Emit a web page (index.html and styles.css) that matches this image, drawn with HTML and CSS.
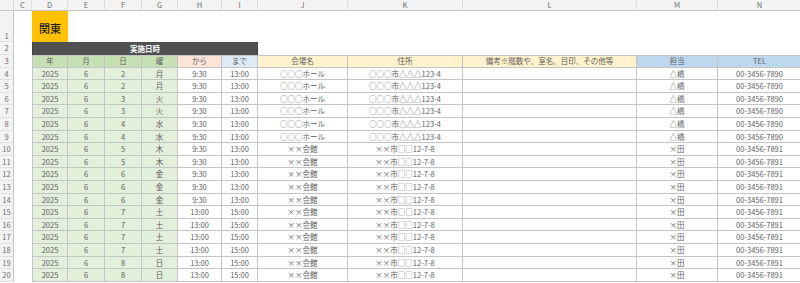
FILE: index.html
```html
<!DOCTYPE html>
<html lang="ja">
<head>
<meta charset="utf-8">
<link rel="stylesheet" href="styles.css">
</head>
<body>
<div class="sheet">
  <div class="ch corner"></div><div class="ch">C</div><div class="ch">D</div><div class="ch">E</div><div class="ch">F</div><div class="ch">G</div><div class="ch">H</div><div class="ch">I</div><div class="ch">J</div><div class="ch">K</div><div class="ch">L</div><div class="ch">M</div><div class="ch">N</div>

  <div class="rn rn-tall">1</div><div class="e"></div><div class="kanto">関東</div><div class="e span10"></div>

  <div class="rn">2</div><div class="e"></div><div class="bar">実施日時</div><div class="e span5"></div>

  <div class="rn">3</div><div class="e"></div>
  <div class="c h hg first">年</div><div class="c h hg">月</div><div class="c h hg">日</div><div class="c h hg">曜</div><div class="c h hp">から</div><div class="c h hb">まで</div><div class="c h hy">会場名</div><div class="c h hy">住所</div><div class="c h hy">備考※階数や、室名、目印、その他等</div><div class="c h hm">担当</div><div class="c h hm">TEL</div>

  <div class="rn">4</div><div class="e"></div><div class="c g first">2025</div><div class="c g">6</div><div class="c g">2</div><div class="c g">月</div><div class="c">9:30</div><div class="c">13:00</div><div class="c">○○○ホール</div><div class="c">○○○市△△△123-4</div><div class="c"></div><div class="c">△橋</div><div class="c">00-3456-7890</div>
  <div class="rn">5</div><div class="e"></div><div class="c g first">2025</div><div class="c g">6</div><div class="c g">2</div><div class="c g">月</div><div class="c">9:30</div><div class="c">13:00</div><div class="c">○○○ホール</div><div class="c">○○○市△△△123-4</div><div class="c"></div><div class="c">△橋</div><div class="c">00-3456-7890</div>
  <div class="rn">6</div><div class="e"></div><div class="c g first">2025</div><div class="c g">6</div><div class="c g">3</div><div class="c g">火</div><div class="c">9:30</div><div class="c">13:00</div><div class="c">○○○ホール</div><div class="c">○○○市△△△123-4</div><div class="c"></div><div class="c">△橋</div><div class="c">00-3456-7890</div>
  <div class="rn">7</div><div class="e"></div><div class="c g first">2025</div><div class="c g">6</div><div class="c g">3</div><div class="c g">火</div><div class="c">9:30</div><div class="c">13:00</div><div class="c">○○○ホール</div><div class="c">○○○市△△△123-4</div><div class="c"></div><div class="c">△橋</div><div class="c">00-3456-7890</div>
  <div class="rn">8</div><div class="e"></div><div class="c g first">2025</div><div class="c g">6</div><div class="c g">4</div><div class="c g">水</div><div class="c">9:30</div><div class="c">13:00</div><div class="c">○○○ホール</div><div class="c">○○○市△△△123-4</div><div class="c"></div><div class="c">△橋</div><div class="c">00-3456-7890</div>
  <div class="rn">9</div><div class="e"></div><div class="c g first">2025</div><div class="c g">6</div><div class="c g">4</div><div class="c g">水</div><div class="c">9:30</div><div class="c">13:00</div><div class="c">○○○ホール</div><div class="c">○○○市△△△123-4</div><div class="c"></div><div class="c">△橋</div><div class="c">00-3456-7890</div>
  <div class="rn">10</div><div class="e"></div><div class="c g first">2025</div><div class="c g">6</div><div class="c g">5</div><div class="c g">木</div><div class="c">9:30</div><div class="c">13:00</div><div class="c">××会館</div><div class="c">××市□□12-7-8</div><div class="c"></div><div class="c">×田</div><div class="c">00-3456-7891</div>
  <div class="rn">11</div><div class="e"></div><div class="c g first">2025</div><div class="c g">6</div><div class="c g">5</div><div class="c g">木</div><div class="c">9:30</div><div class="c">13:00</div><div class="c">××会館</div><div class="c">××市□□12-7-8</div><div class="c"></div><div class="c">×田</div><div class="c">00-3456-7891</div>
  <div class="rn">12</div><div class="e"></div><div class="c g first">2025</div><div class="c g">6</div><div class="c g">6</div><div class="c g">金</div><div class="c">9:30</div><div class="c">13:00</div><div class="c">××会館</div><div class="c">××市□□12-7-8</div><div class="c"></div><div class="c">×田</div><div class="c">00-3456-7891</div>
  <div class="rn">13</div><div class="e"></div><div class="c g first">2025</div><div class="c g">6</div><div class="c g">6</div><div class="c g">金</div><div class="c">9:30</div><div class="c">13:00</div><div class="c">××会館</div><div class="c">××市□□12-7-8</div><div class="c"></div><div class="c">×田</div><div class="c">00-3456-7891</div>
  <div class="rn">14</div><div class="e"></div><div class="c g first">2025</div><div class="c g">6</div><div class="c g">6</div><div class="c g">金</div><div class="c">9:30</div><div class="c">13:00</div><div class="c">××会館</div><div class="c">××市□□12-7-8</div><div class="c"></div><div class="c">×田</div><div class="c">00-3456-7891</div>
  <div class="rn">15</div><div class="e"></div><div class="c g first">2025</div><div class="c g">6</div><div class="c g">7</div><div class="c g">土</div><div class="c">13:00</div><div class="c">15:00</div><div class="c">××会館</div><div class="c">××市□□12-7-8</div><div class="c"></div><div class="c">×田</div><div class="c">00-3456-7891</div>
  <div class="rn">16</div><div class="e"></div><div class="c g first">2025</div><div class="c g">6</div><div class="c g">7</div><div class="c g">土</div><div class="c">13:00</div><div class="c">15:00</div><div class="c">××会館</div><div class="c">××市□□12-7-8</div><div class="c"></div><div class="c">×田</div><div class="c">00-3456-7891</div>
  <div class="rn">17</div><div class="e"></div><div class="c g first">2025</div><div class="c g">6</div><div class="c g">7</div><div class="c g">土</div><div class="c">13:00</div><div class="c">15:00</div><div class="c">××会館</div><div class="c">××市□□12-7-8</div><div class="c"></div><div class="c">×田</div><div class="c">00-3456-7891</div>
  <div class="rn">18</div><div class="e"></div><div class="c g first">2025</div><div class="c g">6</div><div class="c g">7</div><div class="c g">土</div><div class="c">13:00</div><div class="c">15:00</div><div class="c">××会館</div><div class="c">××市□□12-7-8</div><div class="c"></div><div class="c">×田</div><div class="c">00-3456-7891</div>
  <div class="rn">19</div><div class="e"></div><div class="c g first">2025</div><div class="c g">6</div><div class="c g">8</div><div class="c g">日</div><div class="c">13:00</div><div class="c">15:00</div><div class="c">××会館</div><div class="c">××市□□12-7-8</div><div class="c"></div><div class="c">×田</div><div class="c">00-3456-7891</div>
  <div class="rn">20</div><div class="e"></div><div class="c g first">2025</div><div class="c g">6</div><div class="c g">8</div><div class="c g">日</div><div class="c">13:00</div><div class="c">15:00</div><div class="c">××会館</div><div class="c">××市□□12-7-8</div><div class="c"></div><div class="c">×田</div><div class="c">00-3456-7891</div>
</div>
</body>
</html>
```

FILE: styles.css
```css
html, body {
  margin: 0;
  padding: 0;
  background: #ffffff;
  overflow: hidden;
}

.sheet {
  display: grid;
  grid-template-columns: 14px 18px 36px 37px 37px 36px 44px 36px 90px 115px 174px 81px 84px;
  grid-template-rows: 11px 31px 12.6px 13px repeat(17, 12.6px);
  width: 802px;
  font-family: "Noto Sans CJK JP", "Noto Sans", sans-serif;
  font-size: 7.5px;
  color: #5e5e5e;
}

.sheet > div {
  box-sizing: border-box;
  display: flex;
  align-items: center;
  justify-content: center;
  white-space: nowrap;
  overflow: hidden;
  line-height: 1;
}

.ch {
  background: #f3f3f3;
  color: #6e6e6e;
  border-right: 1px solid #dcdcdc;
  border-bottom: 1px solid #c6c6c6;
  font-size: 7.5px;
}

.rn {
  background: #f3f3f3;
  color: #6e6e6e;
  border-right: 1px solid #c6c6c6;
  border-bottom: 1px solid #e2e2e2;
  font-size: 7.5px;
}

.rn-tall {
  align-items: flex-end !important;
  padding-bottom: 2px;
}

.e {
  background: #ffffff;
}

.span10 {
  grid-column: span 10;
}

.span5 {
  grid-column: span 5;
}

.kanto {
  background: #ffc000;
  color: #1a1a1a;
  font-size: 11px;
  font-weight: 500;
  padding-top: 3px;
}

.bar {
  grid-column: span 6;
  background: #505050;
  color: #ffffff;
  font-weight: 700;
  font-size: 7.5px;
  border-left: 1px solid #404040;
  border-right: 1px solid #404040;
}

.c {
  border-right: 1px solid #c4c4c4;
  border-bottom: 1px solid #c4c4c4;
  background: #ffffff;
}

.first {
  border-left: 1px solid #c4c4c4;
}

.h {
  border-top: 1px solid #c4c4c4;
  color: #5e5e5e;
}

.hg { background: #c6e0b4; }
.hp { background: #fce4d6; }
.hb { background: #ddebf7; }
.hy { background: #fff2cc; }
.hm { background: #bdd7ee; }

.g {
  background: #e2efda;
}
```
